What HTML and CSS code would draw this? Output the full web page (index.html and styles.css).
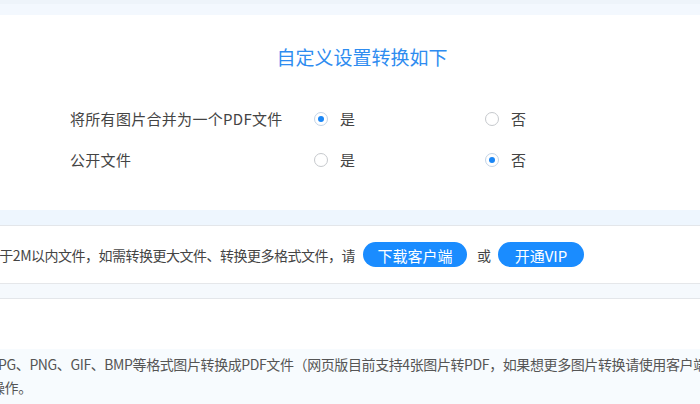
FILE: index.html
```html
<!DOCTYPE html>
<html lang="zh-CN">
<head>
    <meta charset="UTF-8">
    <meta name="viewport" content="width=device-width, initial-scale=1.0">
    <title>图片转PDF</title>
    <link rel="stylesheet" href="styles.css">
</head>
<body>
    <div class="stage">
        <div class="top-line"></div>
        <div class="top-gap"></div>

        <div class="settings">
            <h2 class="settings-title">自定义设置转换如下</h2>
            <div class="option-row">
                <div class="option-label">将所有图片合并为一个PDF文件</div>
                <label class="radio"><span class="dot checked"></span>是</label>
                <label class="radio"><span class="dot"></span>否</label>
            </div>
            <div class="option-row">
                <div class="option-label">公开文件</div>
                <label class="radio"><span class="dot"></span>是</label>
                <label class="radio"><span class="dot checked"></span>否</label>
            </div>
        </div>

        <div class="band band-blue"></div>

        <div class="notice">
            <div class="notice-text"><span>网页版仅支持小于2M以内文件，如需转换更大文件、转换更多格式文件，请</span></div>
            <button class="pill pill-client">下载客户端</button>
            <span class="notice-or">或</span>
            <button class="pill pill-vip">开通VIP</button>
        </div>

        <div class="band band-light"></div>
        <div class="blank"></div>

        <div class="intro">
            <p class="intro-text">JPG、PNG、GIF、BMP等格式图片转换成PDF文件（网页版目前支持4张图片转PDF，如果想更多图片转换请使用客户端操作。</p>
        </div>
    </div>
</body>
</html>
```

FILE: styles.css
```css
body {
    margin: 0;
    background-color: #f7fbfe;
    font-family: "Microsoft YaHei", "Noto Sans CJK SC", sans-serif;
    color: #444;
    overflow: hidden;
}
.stage {
    width: 1000px;
    margin-left: -138px;
}
.top-line {
    height: 4px;
    background-color: #eef4fa;
}
.top-gap {
    height: 11px;
    background-color: #f3f8fe;
}

/* settings card */
.settings {
    height: 195px;
    box-sizing: border-box;
    padding-top: 29px;
    background-color: #ffffff;
}
.settings-title {
    margin: 0 0 28px;
    font-size: 19px;
    line-height: 26px;
    font-weight: normal;
    text-align: center;
    color: #2e8cf0;
}
.option-row {
    display: flex;
    align-items: center;
    height: 41px;
    padding-left: 208px;
    font-size: 15px;
    color: #444;
}
.option-label {
    width: 244px;
    letter-spacing: 0.3px;
}
.radio {
    display: flex;
    align-items: center;
    width: 171px;
}
.dot {
    width: 12px;
    height: 12px;
    margin-right: 12px;
    border: 1px solid #c6c9cd;
    border-radius: 50%;
    box-sizing: content-box;
    position: relative;
}
.dot.checked {
    border-color: #c2d3e6;
}
.dot.checked::after {
    content: "";
    position: absolute;
    left: 3px;
    top: 3px;
    width: 6px;
    height: 6px;
    border-radius: 50%;
    background-color: #1a86f5;
}

/* bands */
.band {
    height: 14px;
    border-bottom: 1px solid #e3e6ea;
}
.band-blue {
    height: 15px;
    background-color: #eef6fe;
}
.band-light {
    background-color: #f5f9fd;
}

/* notice strip */
.notice {
    display: flex;
    align-items: center;
    height: 57px;
    background-color: #ffffff;
    border-bottom: 1px solid #e5e7ea;
    font-size: 14px;
    color: #444;
}
.notice-text {
    display: flex;
    justify-content: flex-end;
    width: 493px;
    margin-right: 8px;
    overflow: hidden;
    white-space: nowrap;
    letter-spacing: -0.5px;
}
.pill {
    height: 25px;
    border: none;
    border-radius: 13px;
    background-color: #1a8cff;
    color: #ffffff;
    font-family: inherit;
    font-size: 15px;
    line-height: 25px;
    cursor: pointer;
}
.pill-client {
    width: 104px;
}
.pill-vip {
    width: 86px;
}
.notice-or {
    margin: 0 7px 0 10px;
}

.blank {
    height: 50px;
    background-color: #ffffff;
}

/* intro text */
.intro {
    padding: 4px 0 10px 129px;
}
.intro-text {
    width: 720px;
    margin: 0;
    font-size: 14px;
    line-height: 23px;
    letter-spacing: -0.4px;
    color: #555;
}
```
